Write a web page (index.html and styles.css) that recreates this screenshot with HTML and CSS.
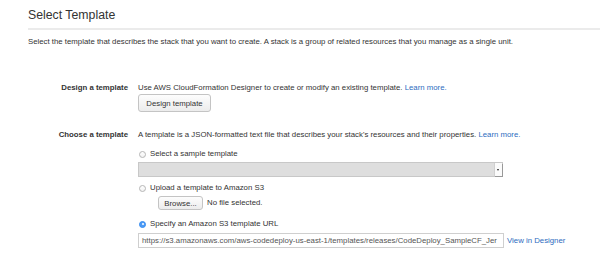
FILE: index.html
```html
<!DOCTYPE html>
<html>
<head>
<meta charset="utf-8">
<link rel="stylesheet" href="styles.css">
</head>
<body>
<div class="page">
  <h1 class="title">Select Template</h1>
  <p class="intro">Select the template that describes the stack that you want to create. A stack is a group of related resources that you manage as a single unit.</p>

  <div class="row row-design">
    <div class="label">Design a template</div>
    <div class="content">
      <div class="line">Use AWS CloudFormation Designer to create or modify an existing template. <a class="link">Learn more.</a></div>
      <button class="btn btn-design">Design template</button>
    </div>
  </div>

  <div class="row row-choose">
    <div class="label">Choose a template</div>
    <div class="content">
      <div class="line">A template is a JSON-formatted text file that describes your stack's resources and their properties. <a class="link">Learn more.</a></div>
      <div class="line radio-line r1"><span class="radio"></span>Select a sample template</div>
      <div class="select"><span class="select-arrow"></span></div>
      <div class="line radio-line r2"><span class="radio"></span>Upload a template to Amazon S3</div>
      <div class="file-line"><button class="btn btn-browse">Browse...</button><span class="nofile">No file selected.</span></div>
      <div class="line radio-line r3"><span class="radio checked"></span>Specify an Amazon S3 template URL</div>
      <div class="url-line">
        <div class="url-input"><span class="url-text">https://s3.amazonaws.com/aws-codedeploy-us-east-1/templates/releases/CodeDeploy_SampleCF_Jer</span></div>
        <a class="link view">View in Designer</a>
      </div>
    </div>
  </div>
</div>
</body>
</html>
```

FILE: styles.css
```css
html, body {
  margin: 0;
  padding: 0;
  background: #fff;
}
body {
  font-family: "Liberation Sans", Arial, sans-serif;
  color: #333;
  font-size: 7.8px;
  line-height: 10px;
}
.page {
  width: 600px;
  height: 280px;
  overflow: hidden;
}
.title {
  margin: 8px 0 0 28px;
  padding-bottom: 6px;
  font-size: 12.3px;
  line-height: 14px;
  font-weight: normal;
  color: #333;
  border-bottom: 2px solid #ebebeb;
}
.intro {
  margin: 7px 0 0 28px;
  color: #333;
}
.row {
  display: grid;
  grid-template-columns: 100px 1fr;
  column-gap: 10px;
  margin-left: 28px;
}
.row-design { margin-top: 36px; }
.row-choose { margin-top: 18px; }
.label {
  text-align: right;
  font-weight: bold;
  color: #333;
  white-space: nowrap;
}
.content {
  display: flex;
  flex-direction: column;
  align-items: flex-start;
}
.line { white-space: nowrap; }
.link {
  color: #2d6cc0;
  text-decoration: none;
}
.btn {
  font-family: "Liberation Sans", Arial, sans-serif;
  font-size: 7.8px;
  color: #333;
  border: 1px solid #c4c4c4;
  border-radius: 3px;
  background: linear-gradient(#fdfdfd, #ececec);
  padding: 0;
  margin: 0;
}
.btn-design {
  margin-top: 1px;
  width: 73px;
  height: 18px;
}
.radio-line {
  display: flex;
  align-items: center;
  gap: 4px;
  padding-left: 1px;
}
.r1 { margin-top: 9px; }
.r2 { margin-top: 6px; }
.r3 { margin-top: 9px; }
.radio {
  width: 7px;
  height: 7px;
  border-radius: 50%;
  border: 1px solid #b5b5b5;
  background: linear-gradient(#fff, #f2f2f2);
  box-sizing: border-box;
  position: relative;
}
.radio.checked {
  border-color: #3a8ef0;
  background: #4c9bf5;
}
.radio.checked::after {
  content: "";
  position: absolute;
  left: 1.5px;
  top: 1.5px;
  width: 2px;
  height: 2px;
  border-radius: 50%;
  background: #fff;
}
.select {
  margin-top: 3px;
  width: 365px;
  height: 15px;
  box-sizing: border-box;
  border: 1px solid #c8c8c8;
  background: #dedede;
  display: flex;
  justify-content: flex-end;
}
.select-arrow {
  width: 7px;
  height: 13px;
  background: #fbfbfb;
  border-left: 1px solid #d0d0d0;
  box-shadow: 1px 1px 0 #999;
  position: relative;
}
.select-arrow::after {
  content: "";
  position: absolute;
  left: 2px;
  top: 6px;
  border-left: 1.5px solid transparent;
  border-right: 1.5px solid transparent;
  border-top: 2px solid #222;
}
.file-line {
  margin-top: 3px;
  margin-left: 20px;
  display: flex;
  align-items: center;
  gap: 4px;
}
.btn-browse {
  width: 45px;
  height: 14px;
}
.url-line {
  margin-top: 4px;
  display: flex;
  align-items: center;
  gap: 3px;
}
.url-input {
  width: 366px;
  height: 15px;
  box-sizing: border-box;
  border: 1px solid #cfcfcf;
  background: #fff;
  padding: 0 3px;
  overflow: hidden;
  white-space: nowrap;
  color: #555;
  line-height: 13px;
}
.view {
  line-height: 10px;
  white-space: nowrap;
}
```
